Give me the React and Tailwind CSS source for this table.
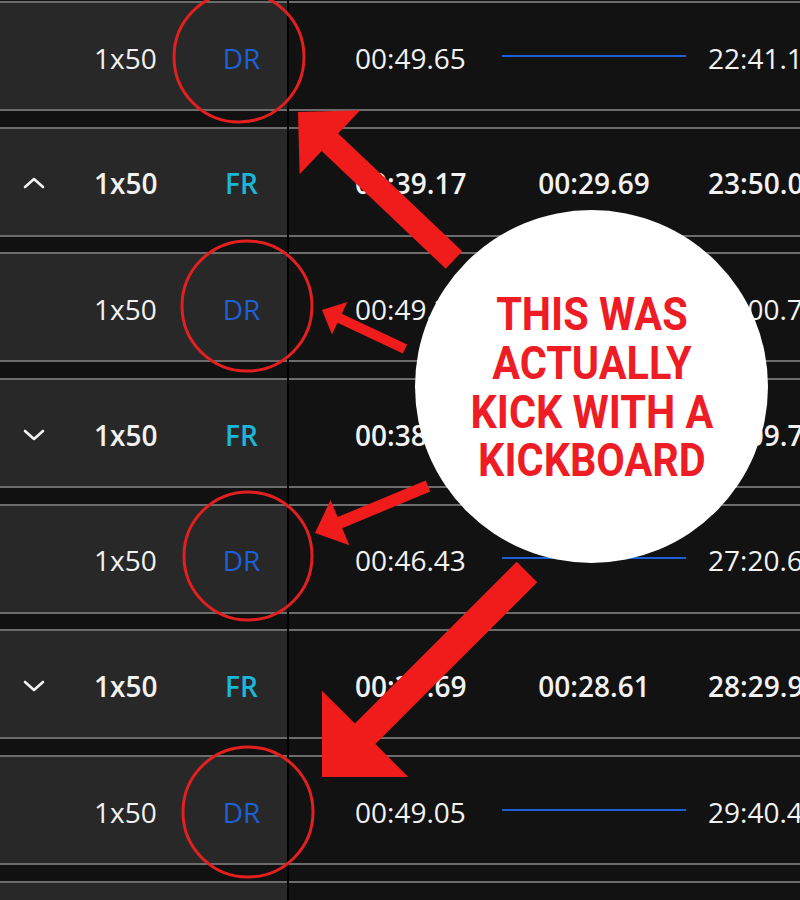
import React from "react";

// datos de las series
const rows = [
  { kind: "sub", t1: "00:49.65", t3: "22:41.13" },
  { kind: "set", chev: "up", t1: "00:39.17", t2: "00:29.69", t3: "23:50.08" },
  { kind: "sub", t1: "00:49.21", t3: "24:00.71" },
  { kind: "set", chev: "down", t1: "00:38.92", t2: "00:28.76", t3: "25:09.74" },
  { kind: "sub", t1: "00:46.43", t3: "27:20.63" },
  { kind: "set", chev: "down", t1: "00:37.69", t2: "00:28.61", t3: "28:29.96" },
  { kind: "sub", t1: "00:49.05", t3: "29:40.45" },
  { kind: "set", chev: "down", t1: "00:38.11", t2: "00:29.02", t3: "30:50.12" },
];

function Chevron({ dir }) {
  return (
    <svg width="22" height="12" viewBox="0 0 22 12">
      <polyline
        points={dir === "up" ? "2,10 11,2 20,10" : "2,2 11,10 20,2"}
        fill="none"
        stroke="#f2f2f2"
        strokeWidth="2.6"
        strokeLinecap="round"
        strokeLinejoin="round"
      />
    </svg>
  );
}

function Row({ row }) {
  const set = row.kind === "set";
  const weight = set ? "font-semibold" : "font-normal";
  return (
    <div className="flex h-[110px] shrink-0">
      <div className="w-[287px] shrink-0 bg-[#282828] border-y-2 border-[#6c6c6c] flex items-center pt-[3px]">
        <div className="w-[68px] shrink-0 flex justify-center">
          {row.chev && <Chevron dir={row.chev} />}
        </div>
        <div className={`w-[128px] shrink-0 pl-[26px] text-[28px] text-[#f2f2f2] ${weight}`}>1x50</div>
        <div
          className={`w-[91px] shrink-0 text-center text-[28px] ${
            set ? "text-[#1cb6d9] font-semibold" : "text-[#1f60d8]"
          }`}
        >
          {set ? "FR" : "DR"}
        </div>
      </div>
      <div className="w-[2px] shrink-0 bg-black" />
      <div className="flex-1 min-w-0 bg-[#121212] border-y-2 border-[#6c6c6c] flex items-center pt-[3px] overflow-hidden">
        <div className={`pl-[66px] w-[179px] shrink-0 text-[28px] text-[#f2f2f2] whitespace-nowrap ${weight}`}>
          {row.t1}
        </div>
        <div className="ml-[34px] w-[184px] shrink-0 flex justify-center">
          {set ? (
            <span className={`text-[28px] text-[#f2f2f2] whitespace-nowrap ${weight}`}>{row.t2}</span>
          ) : (
            <div className="w-full h-[2px] bg-[#1f5fd6] -mt-[3px]" />
          )}
        </div>
        <div className={`ml-[22px] shrink-0 text-[28px] text-[#f2f2f2] whitespace-nowrap ${weight}`}>
          {row.t3}
        </div>
      </div>
    </div>
  );
}

function Gap() {
  return (
    <div className="flex h-[15.7px] shrink-0">
      <div className="w-[287px] shrink-0" />
      <div className="w-[2px] shrink-0 bg-black" />
    </div>
  );
}

function arrow(x1, y1, x2, y2, w, hl, hw) {
  const L = Math.hypot(x2 - x1, y2 - y1);
  const ux = (x2 - x1) / L;
  const uy = (y2 - y1) / L;
  const px = -uy;
  const py = ux;
  const bx = x2 - ux * hl;
  const by = y2 - uy * hl;
  const p = [
    [x1 + (px * w) / 2, y1 + (py * w) / 2],
    [bx + (px * w) / 2, by + (py * w) / 2],
    [bx + (px * hw) / 2, by + (py * hw) / 2],
    [x2, y2],
    [bx - (px * hw) / 2, by - (py * hw) / 2],
    [bx - (px * w) / 2, by - (py * w) / 2],
    [x1 - (px * w) / 2, y1 - (py * w) / 2],
  ];
  return p.map((q) => q.join(",")).join(" ");
}

export default function App() {
  return (
    <div className="relative w-[800px] h-[900px] overflow-hidden bg-[#111111] font-['Open_Sans',sans-serif]">
      <div className="flex flex-col pt-[1px]">
        {rows.map((row, i) => (
          <React.Fragment key={i}>
            <Row row={row} />
            <Gap />
          </React.Fragment>
        ))}
      </div>

      {/* burbuja blanca con el texto */}
      <div className="absolute left-[415px] top-[210px] w-[353px] h-[353px] rounded-full bg-white flex items-center justify-center">
        <p className="text-center text-[#ee1c24] font-['Roboto',sans-serif] font-bold text-[46px] leading-[48.7px] scale-x-[0.9] mt-[2px]">
          THIS WAS
          <br />
          ACTUALLY
          <br />
          KICK WITH A
          <br />
          KICKBOARD
        </p>
      </div>

      {/* circulos y flechas */}
      <svg className="absolute inset-0" width="800" height="900" viewBox="0 0 800 900">
        <g fill="none" stroke="#e3201f" strokeWidth="3">
          <circle cx="239" cy="57" r="65" />
          <circle cx="247" cy="306" r="65" />
          <circle cx="248" cy="556" r="64" />
          <circle cx="248" cy="812" r="65" />
        </g>
        <g fill="#f01b1b">
          <polygon points={arrow(454, 260, 298, 112, 24, 44, 88)} />
          <polygon points={arrow(405, 349, 322, 310, 10, 19.5, 36)} />
          <polygon points={arrow(428, 486, 315, 533, 12, 27, 49)} />
          <polygon points={arrow(527, 572, 322, 777, 29, 61, 122)} />
        </g>
      </svg>
    </div>
  );
}
